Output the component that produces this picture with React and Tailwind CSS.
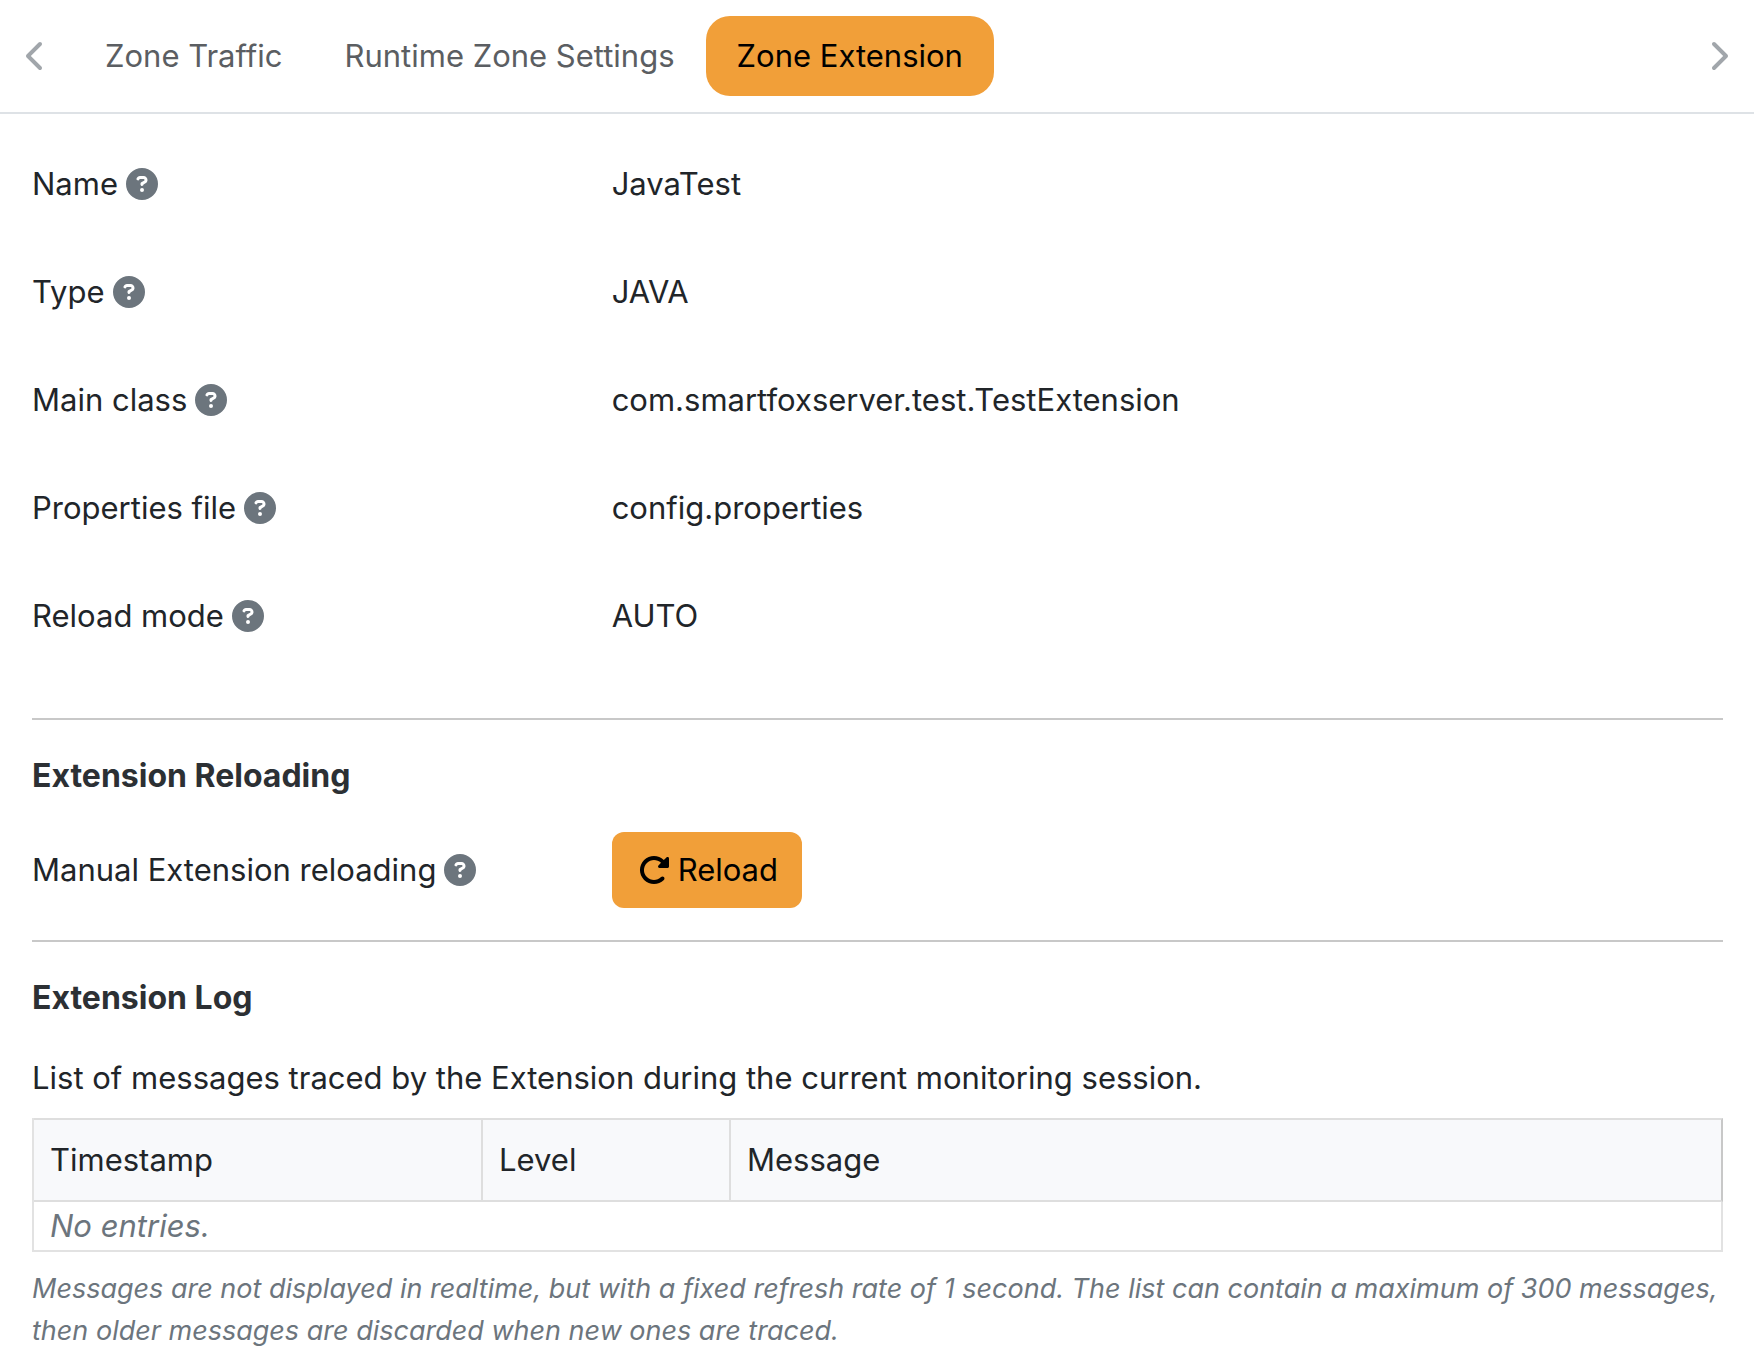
import React, { useState } from "react";
import {
  FaChevronLeft,
  FaChevronRight,
  FaCircleQuestion,
  FaRotateRight,
} from "react-icons/fa6";

const tabs = ["Zone Traffic", "Runtime Zone Settings", "Zone Extension"];

const properties = [
  { label: "Name", value: "JavaTest" },
  { label: "Type", value: "JAVA" },
  { label: "Main class", value: "com.smartfoxserver.test.TestExtension" },
  { label: "Properties file", value: "config.properties" },
  { label: "Reload mode", value: "AUTO" },
];

const Label = ({ children }) => (
  <div className="flex items-center gap-2 whitespace-nowrap">
    <span>{children}</span>
    <FaCircleQuestion className="w-8 h-8 shrink-0 text-[#6c757d]" />
  </div>
);

const TabBar = ({ active, setActive }) => (
  <div className="flex items-center border-b-2 border-[#dee2e6] py-4">
    <button aria-label="Previous tabs" className="w-[74px] shrink-0 pl-[26px] text-[#a1a6ab]">
      <FaChevronLeft className="w-5 h-8" />
    </button>
    <div role="tablist" className="flex flex-1 overflow-hidden">
      {tabs.map((tab) => (
        <button
          key={tab}
          role="tab"
          aria-selected={tab === active}
          onClick={() => setActive(tab)}
          className={
            tab === active
              ? "h-20 px-[31px] rounded-3xl whitespace-nowrap bg-[#f19f39] text-black"
              : "h-20 px-[31px] rounded-3xl whitespace-nowrap text-[#5b5e62]"
          }
        >
          {tab}
        </button>
      ))}
    </div>
    <button aria-label="Next tabs" className="flex w-[74px] shrink-0 justify-end pr-[26px] text-[#a1a6ab]">
      <FaChevronRight className="w-5 h-8" />
    </button>
  </div>
);

const LogTable = () => (
  <table className="w-full table-fixed border-separate border-spacing-0 border-l-2 border-[#e2e2e2] text-left">
    <colgroup>
      <col className="w-[449px]" />
      <col className="w-[248px]" />
      <col />
    </colgroup>
    <thead>
      <tr className="h-[84px] bg-[#f8f9fb]">
        <th className="border-y-2 border-r-2 border-[#dedede] px-4 font-normal">Timestamp</th>
        <th className="border-y-2 border-r-2 border-[#dedede] px-4 font-normal">Level</th>
        <th className="border-y-2 border-r-2 border-[#dedede] border-r-[#c8c8c8] px-4 font-normal">Message</th>
      </tr>
    </thead>
    <tbody>
      <tr>
        <td colSpan={3} className="h-[50px] border-r-2 border-b-2 border-[#e2e2e2] px-4 italic text-[#6c757d]">
          No entries.
        </td>
      </tr>
    </tbody>
  </table>
);

const App = () => {
  const [active, setActive] = useState("Zone Extension");

  return (
    <div className="min-h-screen bg-white font-[Inter,sans-serif] text-[31px] leading-[48px] text-[#212529]">
      <TabBar active={active} setActive={setActive} />

      <main className="pl-8 pr-[31px] pt-4">
        {/* Extension properties */}
        {properties.map((item) => (
          <div key={item.label} className="grid grid-cols-3 gap-x-12 py-[30px]">
            <Label>{item.label}</Label>
            <div className="col-span-2">{item.value}</div>
          </div>
        ))}

        {/* Manual reload */}
        <section className="mt-12 border-t-2 border-[#c8c8c8] pt-8">
          <h2 className="text-[32px] leading-[48px] font-bold text-[#2c3034]">Extension Reloading</h2>
          <div className="mt-8 grid grid-cols-3 items-center gap-x-12">
            <Label>Manual Extension reloading</Label>
            <div className="col-span-2 flex">
              <button className="flex h-[76px] items-center gap-2 rounded-xl bg-[#f19f39] pl-[26px] pr-6 text-black">
                <FaRotateRight className="w-8 h-8" />
                Reload
              </button>
            </div>
          </div>
        </section>

        {/* Log */}
        <section className="mt-8 border-t-2 border-[#c8c8c8] pt-8">
          <h2 className="text-[32px] leading-[48px] font-bold text-[#2c3034]">Extension Log</h2>
          <p className="mt-8 mb-4">
            List of messages traced by the Extension during the current monitoring session.
          </p>
          <LogTable />
          <p className="mt-4 text-[27px] leading-[42px] italic text-[#6c757d]">
            Messages are not displayed in realtime, but with a fixed refresh rate of 1 second. The list can
            contain a maximum of 300 messages, then older messages are discarded when new ones are traced.
          </p>
        </section>
      </main>
    </div>
  );
};

export default App;
